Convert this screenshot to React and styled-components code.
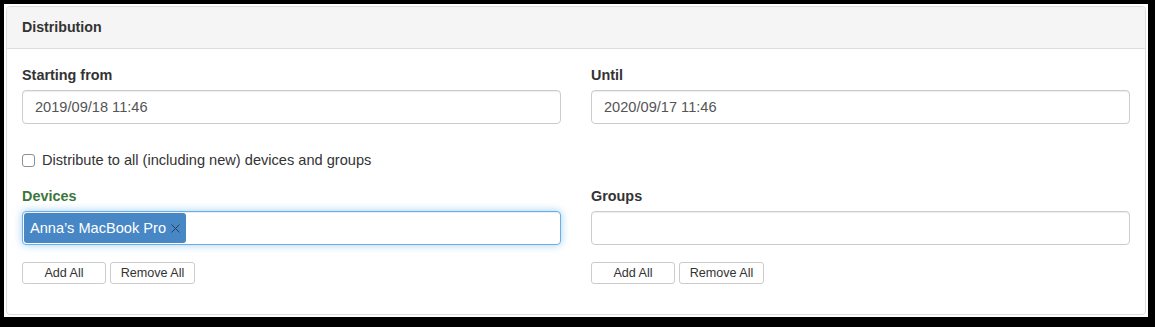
import { createGlobalStyle, styled } from "styled-components";

const GlobalStyle = createGlobalStyle`
  html, body {
    margin: 0;
    background: #000;
  }
  body {
    font-family: "Liberation Sans", Arial, sans-serif;
    font-size: 14.6px;
    color: #333;
  }
  * { box-sizing: border-box; }
`

const Frame = styled.div`
  background: #fff;
  margin: 4px 7px 0 4px;
  padding: 2px;
`

const Panel = styled.div`
  border: 1px solid #ddd;
  border-radius: 4px;
  background: #fff;
  overflow: hidden;
`

const PanelHeading = styled.div`
  background: #f5f5f5;
  border-bottom: 1px solid #ddd;
  padding: 10px 15px;
  line-height: 21px;
  font-size: 14.2px;
  font-weight: bold;
  color: #333;
`

const PanelBody = styled.div`
  padding: 16px 15px 30px;
`

const Row = styled.div`
  display: grid;
  grid-template-columns: 1fr 1fr;
  column-gap: 30px;
  margin-top: ${p => p.$top || 0}px;
`

const Field = styled.div`
  display: flex;
  flex-direction: column;
`

const Label = styled.label`
  display: block;
  line-height: 20px;
  font-size: 14.4px;
  font-weight: bold;
  margin-bottom: 5px;
  color: ${p => (p.$success ? "#3c763d" : "#333")};
`

const TextInput = styled.div`
  height: 34px;
  padding: 6px 12px;
  border: 1px solid #ccc;
  border-radius: 4px;
  line-height: 20px;
  color: #555;
  background: #fff;
  box-shadow: inset 0 1px 1px rgba(0, 0, 0, 0.075);
`

const TagInput = styled.div`
  height: 34px;
  padding: 1px;
  display: flex;
  align-items: stretch;
  border: 1px solid ${p => (p.$focused ? "#66afe9" : "#ccc")};
  border-radius: 4px;
  background: #fff;
  box-shadow: inset 0 1px 1px rgba(0, 0, 0, 0.075)
    ${p => (p.$focused ? ", 0 0 8px rgba(102, 175, 233, 0.6)" : "")};
`

const Tag = styled.span`
  display: inline-flex;
  align-items: center;
  gap: 5px;
  padding: 0 6px 0 6px;
  background: #4787c6;
  color: #fff;
  border-radius: 3px;
  line-height: 20px;
  white-space: nowrap;
`

const TagClose = styled.svg`
  width: 9px;
  height: 9px;
  margin-top: 1px;
`

const CheckRow = styled.label`
  display: flex;
  align-items: center;
  gap: 7px;
  line-height: 20px;
  margin-top: 26px;
  color: #333;
`

const CheckBox = styled.input`
  appearance: none;
  margin: 0;
  width: 13px;
  height: 13px;
  border: 1px solid #8f8f8f;
  border-radius: 3px;
  background: #fff;
`

const ButtonRow = styled.div`
  display: flex;
  gap: 4px;
  margin-top: 17px;
`

const SmallButton = styled.button`
  width: ${p => p.$w}px;
  height: 22px;
  padding: 0 5px;
  font-family: "Liberation Sans", Arial, sans-serif;
  font-size: 12.6px;
  color: #333;
  background: #fff;
  border: 1px solid #ccc;
  border-radius: 3px;
`

function Buttons() {
  return (
    <ButtonRow>
      <SmallButton $w={84}>Add All</SmallButton>
      <SmallButton $w={85}>Remove All</SmallButton>
    </ButtonRow>
  )
}

export default function App() {
  return (
    <>
      <GlobalStyle />
      <Frame>
        <Panel>
          <PanelHeading>Distribution</PanelHeading>
          <PanelBody>
            <Row>
              <Field>
                <Label>Starting from</Label>
                <TextInput>2019/09/18 11:46</TextInput>
              </Field>
              <Field>
                <Label>Until</Label>
                <TextInput>2020/09/17 11:46</TextInput>
              </Field>
            </Row>
            <CheckRow>
              <CheckBox type="checkbox" />
              Distribute to all (including new) devices and groups
            </CheckRow>
            <Row $top={16}>
              <Field>
                <Label $success>Devices</Label>
                <TagInput $focused>
                  <Tag>
                    Anna’s MacBook Pro
                    <TagClose viewBox="0 0 9 9">
                      <path d="M0.5 0.5 L8.5 8.5 M8.5 0.5 L0.5 8.5" stroke="#24405e" strokeWidth="1" fill="none" />
                    </TagClose>
                  </Tag>
                </TagInput>
                <Buttons />
              </Field>
              <Field>
                <Label>Groups</Label>
                <TagInput />
                <Buttons />
              </Field>
            </Row>
          </PanelBody>
        </Panel>
      </Frame>
    </>
  )
}
